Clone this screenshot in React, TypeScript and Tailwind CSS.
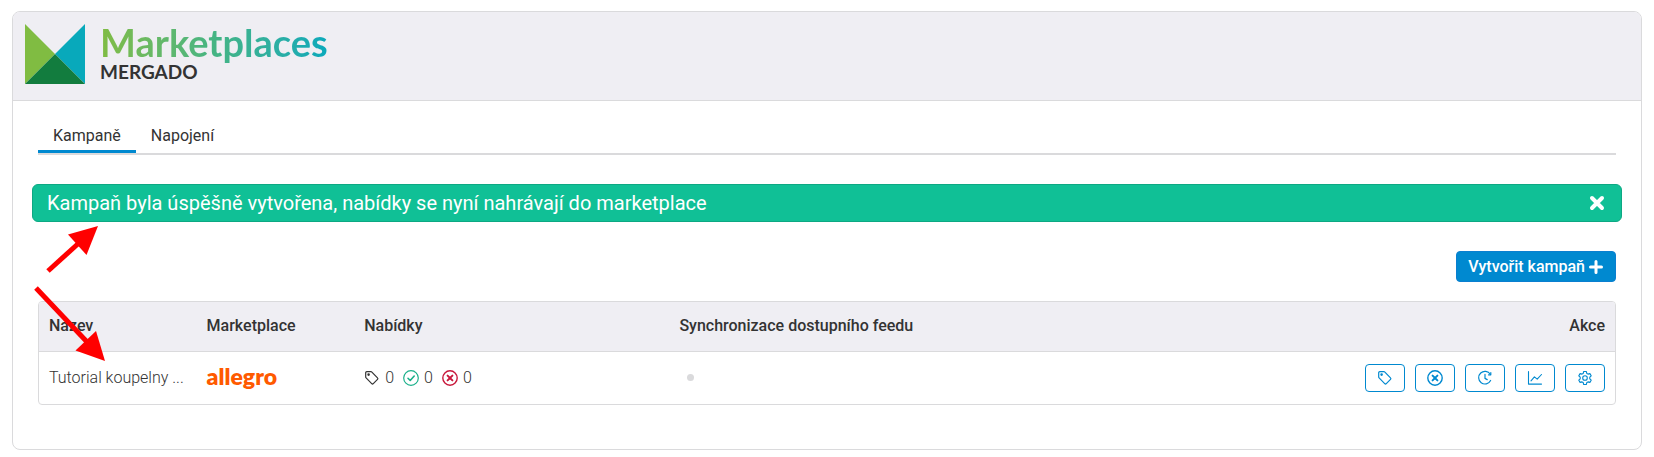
import { useState } from 'react';
import type { ReactNode } from 'react';

interface Campaign {
  id: number;
  name: string;
  total: number;
  active: number;
  failed: number;
}

const campaigns: Campaign[] = [
  { id: 1, name: 'Tutorial koupelny ...', total: 0, active: 0, failed: 0 },
];

const tabs = ['Kampaně', 'Napojení'];

const Icon = ({ children, width = 1.2 }: { children: ReactNode; width?: number }) => (
  <svg
    viewBox="0 0 16 16"
    className="h-4 w-4 shrink-0"
    fill="none"
    stroke="currentColor"
    strokeWidth={width}
    strokeLinecap="round"
    strokeLinejoin="round"
    aria-hidden="true"
  >
    {children}
  </svg>
);

const TagIcon = () => (
  <Icon>
    <path d="M1.7 2.8v4.1c0 .4.1.7.4 1l5.6 5.7c.5.5 1.1.5 1.6 0l4.2-4.2c.5-.5.5-1.1 0-1.6L7.9 2.1a1.4 1.4 0 0 0-1-.4H2.8a1.1 1.1 0 0 0-1.1 1.1z" />
    <circle cx="4.6" cy="4.6" r=".7" />
  </Icon>
);

const CheckCircleIcon = () => (
  <Icon>
    <circle cx="8" cy="8" r="7.3" />
    <path d="M5 8.3l2.2 2.2 4-4.5" strokeWidth="1.6" />
  </Icon>
);

const CrossCircleIcon = () => (
  <Icon width={1.4}>
    <circle cx="8" cy="8" r="7.2" />
    <path d="M5.6 5.6l4.8 4.8M10.4 5.6l-4.8 4.8" strokeWidth="2" />
  </Icon>
);

const HistoryIcon = () => (
  <Icon>
    <path d="M13.3 4.3A6.3 6.3 0 1 0 13.6 10.5" />
    <path d="M13.8 2.5v2.3h-2.3" />
    <path d="M8 4.4v4l2.2 1.2" />
  </Icon>
);

const ChartIcon = () => (
  <Icon width={1.1}>
    <path d="M1.5 1.5v12.6h13" />
    <path d="M4 10.8l3.4-4 2.8 2.4 4.3-4.7" />
  </Icon>
);

const GearIcon = () => (
  <Icon width={1.1}>
    <path d="M6.7 1.5h2.6l.5 1.9 1.2.7 1.9-.5 1.3 2.2-1.4 1.4v1.600l1.4 1.4-1.3 2.2-1.9-.5-1.2.7-.5 1.900H6.700l-.5-1.900-1.200-.7-1.900.5-1.300-2.200 1.400-1.400V7.200L1.800 5.800l1.300-2.200 1.900.5 1.200-.7z" />
    <circle cx="8" cy="8" r="2.3" />
  </Icon>
);

const actions = [
  { label: 'Nabídky', icon: <TagIcon /> },
  { label: 'Chyby', icon: <CrossCircleIcon /> },
  { label: 'Historie', icon: <HistoryIcon /> },
  { label: 'Statistiky', icon: <ChartIcon /> },
  { label: 'Nastavení', icon: <GearIcon /> },
];

const Logo = () => (
  <div className="flex gap-[15px]">
    <svg viewBox="0 0 60 60" className="h-15 w-15" aria-hidden="true">
      <path d="M0 0l30 30L0 60z" fill="#80bc42" />
      <path d="M60 0v60L30 30z" fill="#08a9bb" />
      <path d="M30 30l30 30H0z" fill="#127c3e" />
    </svg>
    <div className="font-['Lato',sans-serif]">
      <div className="-my-1 bg-linear-to-r from-[#80bc42] via-[#45b483] to-[#08a9bb] bg-clip-text text-[38px] leading-11 font-bold text-transparent">
        Marketplaces
      </div>
      <div className="text-[19px] leading-6 font-bold text-[#333333]">MERGADO</div>
    </div>
  </div>
);

const Arrows = () => (
  <svg
    viewBox="0 0 120 150"
    className="pointer-events-none absolute top-[220px] left-0 h-[150px] w-[120px]"
    fill="#ff0000"
    stroke="#ff0000"
    aria-hidden="true"
  >
    <path d="M48 51L80 22" strokeWidth="5" />
    <path d="M98 6L68 14.5 86.5 35z" stroke="none" />
    <path d="M36 68L89 124" strokeWidth="5" />
    <path d="M105 141L96 111 75.5 130.5z" stroke="none" />
  </svg>
);

const App = () => {
  const [activeTab, setActiveTab] = useState('Kampaně');
  const [showAlert, setShowAlert] = useState(true);

  return (
    <div className="relative px-3 pt-[11px] pb-2 font-['Roboto',sans-serif] text-base text-[#333333]">
      <div className="overflow-hidden rounded-lg border border-[#dadadc] bg-white">
        <header className="border-b border-[#dadadc] bg-[#efeef3] px-3 pt-3 pb-4">
          <Logo />
        </header>

        <main className="px-[25px] pt-[23px] pb-11">
          <nav className="flex border-b-2 border-[#dadadc]">
            {tabs.map((tab) => (
              <button
                key={tab}
                onClick={() => setActiveTab(tab)}
                className={`border-b-3 px-[15px] pb-0.5 ${
                  tab === activeTab ? 'border-[#0089d0]' : 'border-transparent'
                }`}
              >
                {tab}
              </button>
            ))}
          </nav>

          {showAlert && (
            <div
              role="alert"
              className="-mx-1.5 mt-[29px] flex items-center justify-between rounded-md border border-[#0da883] bg-[#10c096] pr-[15px] pl-3.5 py-1 text-xl text-white"
            >
              <span>Kampaň byla úspěšně vytvořena, nabídky se nyní nahrávají do marketplace</span>
              <button onClick={() => setShowAlert(false)} aria-label="Zavřít">
                <svg viewBox="0 0 18 18" className="h-[18px] w-[18px]" stroke="currentColor" strokeWidth="4" strokeLinecap="round">
                  <path d="M4 4l10 10M14 4L4 14" />
                </svg>
              </button>
            </div>
          )}

          <div className="mt-[29px] flex justify-end">
            <button className="flex h-[31px] items-center gap-[3px] rounded-sm border border-[#0a7fd0] bg-[#0089d0] px-[11px] font-medium text-white">
              Vytvořit kampaň
              <svg viewBox="0 0 16 16" className="h-4 w-4" stroke="currentColor" strokeWidth="3" strokeLinecap="round" aria-hidden="true">
                <path d="M8 2.5v11M2.5 8h11" />
              </svg>
            </button>
          </div>

          <div className="mt-[19px] overflow-hidden rounded-sm border border-[#dadadc]">
            <table className="w-full table-fixed text-left">
              <thead className="bg-[#efeef3]">
                <tr className="h-[49px] border-b border-[#dadadc]">
                  <th className="w-1/10 px-2.5 font-medium">Název</th>
                  <th className="w-1/10 px-2.5 font-medium">Marketplace</th>
                  <th className="w-1/5 px-2.5 font-medium">Nabídky</th>
                  <th className="w-3/10 px-2.5 font-medium">Synchronizace dostupního feedu</th>
                  <th className="w-3/10 px-2.5 text-right font-medium">Akce</th>
                </tr>
              </thead>
              <tbody>
                {campaigns.map((campaign) => (
                  <tr key={campaign.id} className="h-[53px] font-light">
                    <td className="px-2.5 whitespace-nowrap">{campaign.name}</td>
                    <td className="px-2.5 pb-1">
                      <div className="font-['Lato',sans-serif] text-[23px] leading-6 font-extrabold text-[#ff5a00]">allegro</div>
                    </td>
                    <td className="px-2.5">
                      <div className="flex gap-[9px]">
                        <span className="flex items-center gap-[5px]">
                          <TagIcon />
                          {campaign.total}
                        </span>
                        <span className="flex items-center gap-[5px]">
                          <span className="text-[#1ab08a]">
                            <CheckCircleIcon />
                          </span>
                          {campaign.active}
                        </span>
                        <span className="flex items-center gap-[5px]">
                          <span className="text-[#c8193c]">
                            <CrossCircleIcon />
                          </span>
                          {campaign.failed}
                        </span>
                      </div>
                    </td>
                    <td className="px-2.5">
                      <div className="ml-2 h-[7px] w-[7px] rounded-full bg-[#dadadc]" />
                    </td>
                    <td className="px-2.5">
                      <div className="flex justify-end gap-2.5">
                        {actions.map((action) => (
                          <button
                            key={action.label}
                            aria-label={action.label}
                            className="flex h-7 w-10 items-center justify-center rounded-sm border border-[#0089d0] text-[#0089d0]"
                          >
                            {action.icon}
                          </button>
                        ))}
                      </div>
                    </td>
                  </tr>
                ))}
              </tbody>
            </table>
          </div>
        </main>
      </div>
      <Arrows />
    </div>
  );
};

export default App;
